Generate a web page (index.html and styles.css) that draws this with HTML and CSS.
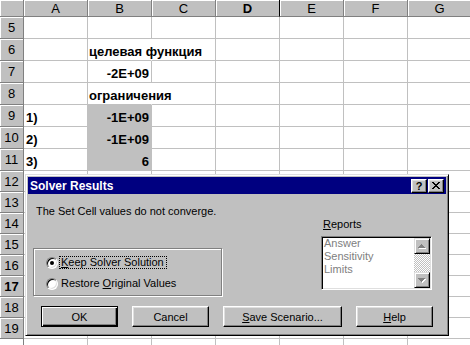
FILE: index.html
```html
<!DOCTYPE html>
<html>
<head>
<meta charset="utf-8">
<title>Solver Results</title>
<link rel="stylesheet" href="styles.css">
</head>
<body>
<div class="sheet">
  <div class="hd"></div><div class="hd">A</div><div class="hd">B</div><div class="hd">C</div><div class="hd hd-active">D</div><div class="hd">E</div><div class="hd">F</div><div class="hd">G</div>

  <div class="hd">5</div><div class="c"></div><div class="c"></div><div class="c"></div><div class="c"></div><div class="c"></div><div class="c"></div><div class="c"></div>
  <div class="hd">6</div><div class="c"></div><div class="c c-over">целевая функция</div><div class="c"></div><div class="c"></div><div class="c"></div><div class="c"></div><div class="c"></div>
  <div class="hd">7</div><div class="c"></div><div class="c c-num">-2E+09</div><div class="c"></div><div class="c"></div><div class="c"></div><div class="c"></div><div class="c"></div>
  <div class="hd">8</div><div class="c"></div><div class="c c-over">ограничения</div><div class="c"></div><div class="c"></div><div class="c"></div><div class="c"></div><div class="c"></div>
  <div class="hd">9</div><div class="c">1)</div><div class="c c-num c-grey">-1E+09</div><div class="c"></div><div class="c"></div><div class="c"></div><div class="c"></div><div class="c"></div>
  <div class="hd">10</div><div class="c">2)</div><div class="c c-num c-grey">-1E+09</div><div class="c"></div><div class="c"></div><div class="c"></div><div class="c"></div><div class="c"></div>
  <div class="hd">11</div><div class="c">3)</div><div class="c c-num c-grey">6</div><div class="c"></div><div class="c"></div><div class="c"></div><div class="c"></div><div class="c"></div>
  <div class="hd">12</div><div class="c"></div><div class="c"></div><div class="c"></div><div class="c"></div><div class="c"></div><div class="c"></div><div class="c"></div>
  <div class="hd">13</div><div class="c"></div><div class="c"></div><div class="c"></div><div class="c"></div><div class="c"></div><div class="c"></div><div class="c"></div>
  <div class="hd">14</div><div class="c"></div><div class="c"></div><div class="c"></div><div class="c"></div><div class="c"></div><div class="c"></div><div class="c"></div>
  <div class="hd">15</div><div class="c"></div><div class="c"></div><div class="c"></div><div class="c"></div><div class="c"></div><div class="c"></div><div class="c"></div>
  <div class="hd">16</div><div class="c"></div><div class="c"></div><div class="c"></div><div class="c"></div><div class="c"></div><div class="c"></div><div class="c"></div>
  <div class="hd hd-bold">17</div><div class="c"></div><div class="c"></div><div class="c"></div><div class="c"></div><div class="c"></div><div class="c"></div><div class="c"></div>
  <div class="hd">18</div><div class="c"></div><div class="c"></div><div class="c"></div><div class="c"></div><div class="c"></div><div class="c"></div><div class="c"></div>
  <div class="hd">19</div><div class="c"></div><div class="c"></div><div class="c"></div><div class="c"></div><div class="c"></div><div class="c"></div><div class="c"></div>
  <div class="hd-blank"></div><div class="c"></div><div class="c"></div><div class="c"></div><div class="c"></div><div class="c"></div><div class="c"></div><div class="c"></div>
</div>

<div class="dialog">
  <div class="titlebar">
    <span class="title">Solver Results</span>
    <div class="capbtns">
      <span class="capbtn capbtn-help">?</span>
      <span class="capbtn"><svg width="8" height="7" viewBox="0 0 8 7"><path d="M0 0h2v1h1v1h2v-1h1v-1h2v1h-1v1h-1v1h-1v1h1v1h1v1h1v1h-2v-1h-1v-1h-2v1h-1v1h-2v-1h1v-1h1v-1h1v-1h-1v-1h-1v-1h-1z" fill="#000" shape-rendering="crispEdges"/></svg></span>
    </div>
  </div>
  <div class="main">
    <div class="leftcol">
      <div class="msg">The Set Cell values do not converge.</div>
      <div class="group">
        <div class="radio-row"><span class="radio radio-on"></span><span class="rlabel rlabel-focus"><u>K</u>eep Solver Solution</span></div>
        <div class="radio-row"><span class="radio"></span><span class="rlabel">Restore <u>O</u>riginal Values</span></div>
      </div>
    </div>
    <div class="rightcol">
      <div class="rep-label"><u>R</u>eports</div>
      <div class="listbox">
        <div class="items">
          <div>Answer</div>
          <div>Sensitivity</div>
          <div>Limits</div>
        </div>
        <div class="vscroll">
          <div class="sbtn"><svg width="8" height="5" viewBox="0 0 8 5" shape-rendering="crispEdges"><path d="M4 1h1v1h-1z M3 2h3v1h-3z M2 3h5v1h-5z M1 4h7v1h-7z" fill="#fff"/><path d="M3 0h1v1h-1z M2 1h3v1h-3z M1 2h5v1h-5z M0 3h7v1h-7z" fill="#808080"/></svg></div>
          <div class="track"></div>
          <div class="sbtn"><svg width="8" height="5" viewBox="0 0 8 5" shape-rendering="crispEdges"><path d="M1 1h7v1h-7z M2 2h5v1h-5z M3 3h3v1h-3z M4 4h1v1h-1z" fill="#fff"/><path d="M0 0h7v1h-7z M1 1h5v1h-5z M2 2h3v1h-3z M3 3h1v1h-1z" fill="#808080"/></svg></div>
        </div>
      </div>
    </div>
  </div>
  <div class="buttons">
    <div class="btn btn-default">OK</div>
    <div class="btn">Cancel</div>
    <div class="btn btn-wide"><u>S</u>ave Scenario...</div>
    <div class="btn"><u>H</u>elp</div>
  </div>
</div>
</body>
</html>
```
FILE: styles.css
```css
html, body {
  margin: 0;
  padding: 0;
}
body {
  width: 470px;
  height: 345px;
  overflow: hidden;
  position: relative;
  background: #fff;
  font-family: "Liberation Sans", Arial, sans-serif;
}

/* ---------- spreadsheet ---------- */
.sheet {
  display: grid;
  grid-template-columns: 24px repeat(7, 64px);
  grid-template-rows: 17px repeat(7, 22px) repeat(9, 21px);
  width: 472px;
}
.hd {
  box-sizing: border-box;
  background: #c0c0c0;
  border-right: 1px solid #808080;
  border-bottom: 1px solid #808080;
  box-shadow: inset 1px 1px #fff;
  display: flex;
  align-items: center;
  justify-content: center;
  font-size: 13px;
  color: #000;
}
.hd-active {
  font-weight: bold;
  border-right-color: #000;
}
.hd-bold {
  font-weight: bold;
}
.hd-blank {
  box-sizing: border-box;
  background: #fff;
  border-right: 1px solid #808080;
}
.c {
  box-sizing: border-box;
  border-right: 1px solid #c0c0c0;
  border-bottom: 1px solid #c0c0c0;
  display: flex;
  align-items: flex-end;
  padding: 0 2px 1px 2px;
  font-size: 13px;
  font-weight: bold;
  line-height: 15px;
  white-space: nowrap;
  min-width: 0;
  color: #000;
}
.c-over {
  padding-left: 1px;
  border-right-color: transparent;
}
.c-num {
  justify-content: flex-end;
}
.c-grey {
  background: #c0c0c0;
}

/* ---------- dialog ---------- */
.dialog {
  position: absolute;
  left: 25px;
  top: 174px;
  width: 424px;
  height: 162px;
  box-sizing: border-box;
  background: #c0c0c0;
  border: 1px solid;
  border-color: #dfdfdf #000 #000 #dfdfdf;
  box-shadow: inset 1px 1px #fff, inset -1px -1px #808080;
  padding: 2px;
  font-size: 11px;
  color: #000;
}
.titlebar {
  height: 17px;
  background: #000080;
  display: flex;
  align-items: center;
  justify-content: space-between;
  padding-left: 2px;
}
.title {
  color: #fff;
  font-weight: bold;
  font-size: 12px;
}
.capbtns {
  display: flex;
  gap: 1px;
  margin-right: 2px;
}
.capbtn {
  box-sizing: border-box;
  width: 16px;
  height: 14px;
  background: #c0c0c0;
  border: 1px solid;
  border-color: #fff #000 #000 #fff;
  box-shadow: inset -1px -1px #808080, inset 1px 1px #dfdfdf;
  display: flex;
  align-items: center;
  justify-content: center;
}
.capbtn-help {
  font-weight: bold;
  font-size: 11px;
  line-height: 12px;
}

.main {
  display: flex;
  padding-top: 11px;
}
.leftcol {
  width: 189px;
  padding-left: 5px;
}
.msg {
  margin-left: 3px;
  line-height: 13px;
  white-space: nowrap;
}
.group {
  box-sizing: border-box;
  margin-top: 30px;
  width: 189px;
  height: 48px;
  border: 1px solid #808080;
  box-shadow: inset 1px 1px #fff, 1px 1px #fff;
  padding: 7px 0 0 12px;
  display: flex;
  flex-direction: column;
  gap: 8px;
}
.radio-row {
  display: flex;
  align-items: center;
  height: 13px;
}
.radio {
  position: relative;
  box-sizing: border-box;
  width: 12px;
  height: 12px;
  border-radius: 50%;
  border: 1px solid;
  border-color: #808080 #fff #fff #808080;
  box-shadow: inset 1px 1px #000, inset -1px -1px #dfdfdf;
  background: #fff;
  flex: none;
}
.radio-on::after {
  content: "";
  position: absolute;
  left: 3px;
  top: 3px;
  width: 4px;
  height: 4px;
  border-radius: 50%;
  background: #000;
}
.rlabel {
  margin-left: 1px;
  padding: 0 2px 0 1px;
  border: 1px solid transparent;
  line-height: 11px;
  white-space: nowrap;
}
.rlabel-focus {
  border: 1px dotted #000;
}

.rightcol {
  margin-left: 99px;
  padding-top: 13px;
}
.rep-label {
  padding-left: 2px;
  line-height: 13px;
}
.listbox {
  box-sizing: border-box;
  margin-top: 5px;
  width: 111px;
  height: 54px;
  background: #fff;
  border: 1px solid;
  border-color: #808080 #fff #fff #808080;
  box-shadow: inset 1px 1px #000, inset -1px -1px #dfdfdf;
  padding: 1px;
  display: flex;
}
.items {
  flex: 1;
  padding-left: 1px;
  margin-top: -1px;
  line-height: 13px;
  color: #808080;
}
.vscroll {
  width: 16px;
  display: flex;
  flex-direction: column;
}
.sbtn {
  box-sizing: border-box;
  height: 16px;
  background: #c0c0c0;
  border: 1px solid;
  border-color: #dfdfdf #000 #000 #dfdfdf;
  box-shadow: inset 1px 1px #fff, inset -1px -1px #808080;
  display: flex;
  align-items: center;
  justify-content: center;
}
.track {
  flex: 1;
  background: repeating-conic-gradient(#c0c0c0 0 25%, #fff 0 50%) 0 0 / 2px 2px;
}

.buttons {
  display: flex;
  gap: 14px;
  margin-top: 10px;
  padding-left: 13px;
}
.btn {
  box-sizing: border-box;
  width: 77px;
  height: 21px;
  border: 1px solid;
  border-color: #fff #000 #000 #fff;
  box-shadow: inset -1px -1px #808080, inset 1px 1px #dfdfdf;
  display: flex;
  align-items: center;
  justify-content: center;
  white-space: nowrap;
}
.btn-default {
  border-color: #000;
  box-shadow: inset 1px 1px #fff, inset -1px -1px #000, inset -2px -2px #808080;
}
.btn-wide {
  width: 119px;
}
```
